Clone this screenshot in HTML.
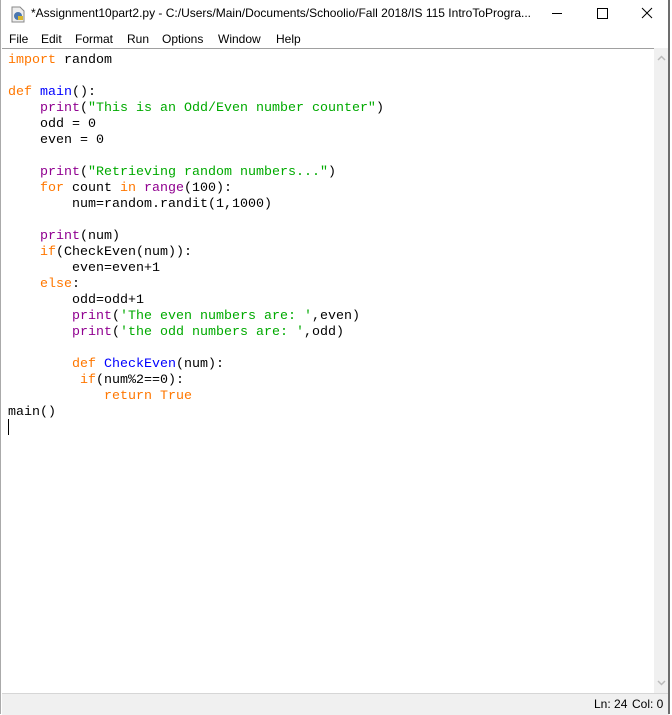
<!DOCTYPE html>
<html><head><meta charset="utf-8"><style>
body{margin:0;width:672px;height:714px;background:#fff;position:relative;overflow:hidden;font-family:"Liberation Sans",sans-serif}
.win{position:absolute;left:0;top:0;width:668px;height:714px;border-left:1px solid #aaa;box-sizing:border-box}
.rb{position:absolute;left:668px;top:0;width:2px;height:714px;background:#6d6d6d}
.title{position:absolute;left:30px;top:6px;font-size:12px;color:#000;white-space:nowrap}
.menu{position:absolute;top:32px;left:0;font-size:12px;white-space:nowrap}
.menu span{position:absolute}
.ed{position:absolute;left:1px;top:48px;width:652px;height:645px;border-top:1px solid #a0a0a0}
.sb{position:absolute;left:653px;top:48px;width:15px;height:645px;background:#f0f0f0}
.status{position:absolute;left:1px;top:693px;width:667px;height:21px;background:#f0f0f0;border-top:1px solid #d6d6d6;font-size:12px}
pre{position:absolute;left:7px;top:53px;margin:0;font-family:"Liberation Mono",monospace;font-size:13.33px;line-height:16px;color:#000}
.k{color:#ff7700}.b{color:#900090}.s{color:#00aa00}.f{color:#0000ff}
</style></head><body>
<div class="win">
<svg style="position:absolute;left:9px;top:6px" width="17" height="17" viewBox="0 0 17 17"><path d="M2 1h8l4 4v11H2z" fill="#eee" stroke="#888"/><circle cx="8" cy="10" r="4" fill="#4a77b0"/><path d="M8 10h5v4H8z" fill="#d9b830"/></svg>
<div class="title">*Assignment10part2.py - C:/Users/Main/Documents/Schoolio/Fall 2018/IS 115 IntroToProgra...</div>
<svg style="position:absolute;left:550px;top:6px" width="110" height="16"><path d="M1 7.5h10" stroke="#000"/><rect x="46.5" y="2.5" width="10" height="10" fill="none" stroke="#000"/><path d="M91 2l10 10M101 2L91 12" stroke="#000"/></svg>
<div class="menu"><span style="left:8px">File</span><span style="left:40px">Edit</span><span style="left:74px">Format</span><span style="left:126px">Run</span><span style="left:161px">Options</span><span style="left:217px">Window</span><span style="left:275px">Help</span></div>
<div class="ed"></div>
<div class="sb"><svg width="15" height="645"><path d="M4 12l3.5-3.5L11 12" stroke="#bbb" fill="none" stroke-width="1.5"/><path d="M4 633l3.5 3.5L11 633" stroke="#bbb" fill="none" stroke-width="1.5"/></svg></div>
<pre><span class="k">import</span> random

<span class="k">def</span> <span class="f">main</span>():
    <span class="b">print</span>(<span class="s">"This is an Odd/Even number counter"</span>)
    odd = 0
    even = 0

    <span class="b">print</span>(<span class="s">"Retrieving random numbers..."</span>)
    <span class="k">for</span> count <span class="k">in</span> <span class="b">range</span>(100):
        num=random.randit(1,1000)

    <span class="b">print</span>(num)
    <span class="k">if</span>(CheckEven(num)):
        even=even+1
    <span class="k">else</span>:
        odd=odd+1
        <span class="b">print</span>(<span class="s">'The even numbers are: '</span>,even)
        <span class="b">print</span>(<span class="s">'the odd numbers are: '</span>,odd)

        <span class="k">def</span> <span class="f">CheckEven</span>(num):
         <span class="k">if</span>(num%2==0):
            <span class="k">return</span> <span class="k">True</span>
main()
</pre>
<div style="position:absolute;left:7px;top:419px;width:1px;height:16px;background:#000"></div>
<div class="status"><span style="position:absolute;left:592px;top:3px">Ln: 24</span><span style="position:absolute;left:630px;top:3px">Col: 0</span></div>
</div>
<div class="rb"></div>
</body></html>
